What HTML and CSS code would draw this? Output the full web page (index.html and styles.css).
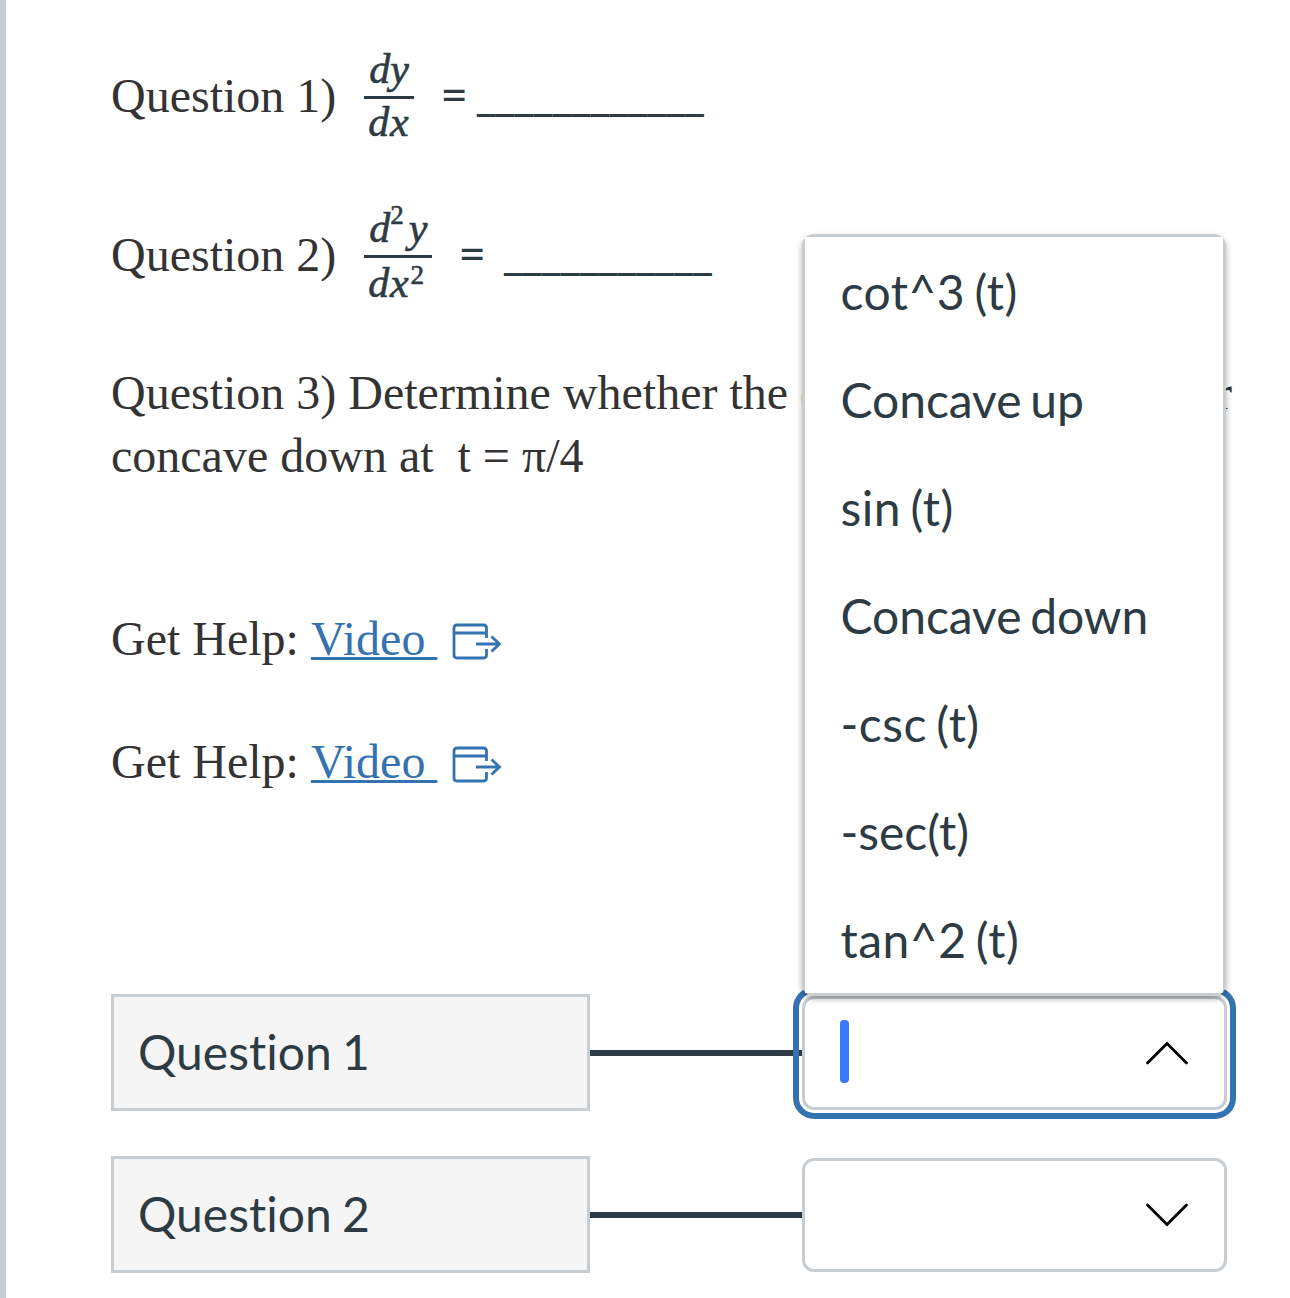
FILE: index.html
```html
<!DOCTYPE html>
<html lang="en">

<head>
<meta charset="utf-8">
<title>Quiz</title>

<link rel="stylesheet" href="styles.css">
</head>

<body>

<main class="question">

  <div class="formula">
    <span>Question 1)</span>
    <span class="fraction">
      <span class="top">dy</span>
      <span class="bottom">dx</span>
    </span>
    <span class="equals">=</span>
    <span class="blank">____________</span>
  </div>

  <div class="formula">
    <span>Question 2)</span>
    <span class="fraction squared">
      <span class="top">d<sup>2</sup>y</span>
      <span class="bottom">dx<sup>2</sup></span>
    </span>
    <span class="equals">=</span>
    <span class="blank wide">___________</span>
  </div>

  <p class="task">Question 3) Determine whether the curve is concave up or concave down at &nbsp;t = π/4</p>

  <p class="help">Get Help: <a href="#">Video&nbsp;</a>
    <svg class="external" width="50" height="38" viewBox="0 0 50 38">
      <path d="M34.500 15V5q0-3-3-3H5Q2 2 2 5v27q0 3 3 3h26.500q3 0 3-3v-6M2 10h32.500M24 21h24M39.500 13.500l8 7.500-8 7.500"/>
    </svg>
  </p>

  <p class="help">Get Help: <a href="#">Video&nbsp;</a>
    <svg class="external" width="50" height="38" viewBox="0 0 50 38">
      <path d="M34.500 15V5q0-3-3-3H5Q2 2 2 5v27q0 3 3 3h26.500q3 0 3-3v-6M2 10h32.500M24 21h24M39.500 13.500l8 7.500-8 7.500"/>
    </svg>
  </p>

  <div class="matching">
    <div class="match">
      <div class="label">Question 1</div>
      <div class="line"></div>
      <div class="select open">
        <span class="caret"></span>
        <svg class="arrow" width="44" height="24" viewBox="0 0 44 24"><path d="M2.500 22L22 2.500 41.500 22"/></svg>

        <div class="menu">
          <ul>
            <li class="fn">cot^3 (t)</li>
            <li>Concave up</li>
            <li class="fn">sin (t)</li>
            <li>Concave down</li>
            <li class="fn">-csc (t)</li>
            <li>-sec(t)</li>
            <li class="fn">tan^2 (t)</li>
          </ul>
        </div>
      </div>
    </div>

    <div class="match">
      <div class="label">Question 2</div>
      <div class="line"></div>
      <div class="select">
        <svg class="arrow" width="44" height="24" viewBox="0 0 44 24"><path d="M2.500 2L22 21.500 41.500 2"/></svg>
      </div>
    </div>
  </div>

</main>

</body>
</html>
```
FILE: styles.css
```css
* {
  box-sizing: border-box;
}

body {
  margin: 0;
  background: #fff;
  color: #2d3b45;
  font: 48px/63px Lato, sans-serif;
  font-variant-ligatures: none;
}

.question {
  height: 1298px;
  padding: 16px 50px 0 105px;
  border-left: 6px solid #c7cdd1;
  overflow: hidden;
}

/* text of the questions */

.formula,
.task,
.help {
  margin: 0;
  font-family: "Liberation Serif", serif;
  color: #333;
}

.formula {
  display: flex;
  align-items: center;
  height: 159px;
}

.fraction {
  width: 50px;
  margin: 1px 26px 0 28px;
  color: #2d3b45;
  font-size: 42px;
  font-style: italic;
  -webkit-text-stroke: 0.6px #2d3b45;
}

.fraction.squared {
  width: 68px;
}

.fraction span {
  display: block;
  height: 48px;
  padding-left: 5px;
  line-height: 43px;
}

.fraction .bottom {
  height: 48px;
  padding-left: 4px;
  border-top: 3px solid #2d3b45;
  letter-spacing: 0.8px;
  line-height: 46px;
}

.fraction sup {
  font-size: 27px;
  font-style: normal;
  line-height: 0;
  vertical-align: 13px;
}

.squared .bottom {
  line-height: 50px;
}

.squared .top sup {
  margin-right: 5px;
  vertical-align: 18px;
}

.squared .bottom sup {
  margin-left: 1px;
}

.equals,
.blank {
  margin-bottom: 4px;
  font-family: Lato, sans-serif;
  color: #2d3b45;
}

.blank {
  margin-left: 7px;
  margin-bottom: 8px;
  letter-spacing: -3.1px;
}

.blank.wide {
  margin-left: 16px;
}

.task {
  margin-top: 27px;
  margin-bottom: 120px;
}

.help {
  display: flex;
  height: 63px;
  margin-bottom: 60px;
  white-space: pre;
}

.help a {
  color: #3572b0;
  text-decoration: underline 3px;
  text-decoration-skip-ink: none;
}

.external {
  margin: 16px 0 0 15px;
  fill: none;
  stroke: #3572b0;
  stroke-width: 2.8;
}

/* matching */

.matching {
  margin-top: 201px;
}

.match {
  display: flex;
  align-items: center;
  height: 117px;
  margin-bottom: 45px;
}

.label {
  width: 479px;
  height: 117px;
  padding-left: 24px;
  border: 3px solid #c7cdd1;
  background: #f5f5f5;
  line-height: 109px;
  word-spacing: -2px;
}

.line {
  width: 212px;
  height: 6px;
  background: #2d3b45;
}

.select {
  position: relative;
  display: flex;
  align-items: center;
  width: 425px;
  height: 114px;
  padding: 0 35px;
  border: 3px solid #c7cdd1;
  border-radius: 12px;
  background: #fff;
}

.select.open {
  outline: 6px solid #3572b0;
  outline-offset: 3px;
}

.caret {
  width: 9px;
  height: 63px;
  margin-bottom: 2px;
  border-radius: 4px;
  background: #3a7af8;
}

.arrow {
  margin-left: auto;
  fill: none;
  stroke: #000;
  stroke-width: 2.8;
  stroke-linecap: round;
}

.menu {
  position: absolute;
  left: -3px;
  bottom: 111px;
  width: 424px;
  border: 3px solid #c7cdd1;
  border-radius: 12px;
  box-shadow: 0 3px 6px rgba(0, 0, 0, 0.3);
}

.menu ul {
  margin: 0;
  padding: 0;
  background: #fff;
  list-style: none;
}

.menu li {
  height: 108px;
  padding-left: 35.5px;
  line-height: 109px;
  letter-spacing: -0.05px;
  word-spacing: -3.5px;
}

.menu .fn {
  letter-spacing: 0.5px;
}
```
